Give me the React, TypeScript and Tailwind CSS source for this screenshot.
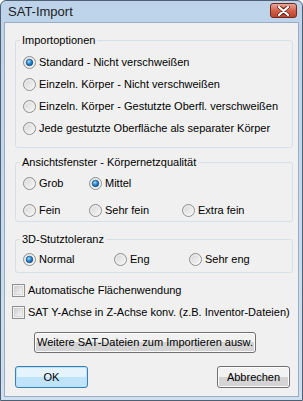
import React from "react";

const font = { fontFamily: '"Liberation Sans", Arial, sans-serif' };

function Radio({ checked = false }: { checked?: boolean }) {
  return (
    <svg width="13" height="13" viewBox="0 0 13 13" className="shrink-0">
      <defs>
        <linearGradient id="rbg" x1="0" y1="0" x2="1" y2="1">
          <stop offset="0" stopColor="#d2d2d2" />
          <stop offset="1" stopColor="#fbfbfb" />
        </linearGradient>
        <radialGradient id="rdot" cx="0.4" cy="0.35" r="0.7">
          <stop offset="0" stopColor="#9fe1ff" />
          <stop offset="0.5" stopColor="#2a8ad4" />
          <stop offset="1" stopColor="#0d4f8e" />
        </radialGradient>
      </defs>
      <circle cx="6.5" cy="6.5" r="6" fill="url(#rbg)" stroke="#8c8f8f" />
      <circle cx="6.5" cy="6.5" r="4.6" fill="none" stroke="#f4f4f4" strokeWidth="0.8" />
      {checked && <circle cx="6.5" cy="6.5" r="3.3" fill="url(#rdot)" stroke="#1b4f7f" strokeWidth="0.7" />}
    </svg>
  );
}

function Check() {
  return (
    <svg width="13" height="13" viewBox="0 0 13 13" className="shrink-0">
      <defs>
        <linearGradient id="cbg" x1="0" y1="0" x2="1" y2="1">
          <stop offset="0" stopColor="#cfcfcf" />
          <stop offset="1" stopColor="#f8f8f8" />
        </linearGradient>
      </defs>
      <rect x="0.5" y="0.5" width="12" height="12" fill="#f4f4f4" stroke="#8e8f8f" />
      <rect x="2.5" y="2.5" width="8" height="8" fill="url(#cbg)" stroke="#c6c6c6" strokeWidth="0.6" />
    </svg>
  );
}

function Option({ label, checked }: { label: string; checked?: boolean }) {
  return (
    <div className="flex items-center gap-[3px] whitespace-nowrap">
      <Radio checked={checked} />
      <span>{label}</span>
    </div>
  );
}

function Group({ title, children, className }: { title: string; children: React.ReactNode; className: string }) {
  return (
    <fieldset className={`ml-[10px] w-[278px] border border-[#d5dfe5] rounded-[3px] ${className}`}>
      <legend className="ml-[4px] px-[2px] leading-[13px]">{title}</legend>
      {children}
    </fieldset>
  );
}

export default function App() {
  return (
    <div
      className="w-[303px] h-[401px] flex flex-col border border-[#4f6075] rounded-t-[6px] bg-linear-to-b from-[#bdd3ea] to-[#cfdff0] px-[3px] pb-[3px] text-[11px] text-black"
      style={font}
    >
      <div className="h-[21px] flex items-center justify-between shrink-0">
        <span className="pl-[4px] text-[13px] text-[#1c1c1c]">SAT-Import</span>
        <div className="mr-[2px] mt-[-2px] w-[27px] h-[15px] rounded-[3px] border border-[#6d2c22] bg-linear-to-b from-[#e9a597] via-[#d3614c] to-[#c3432c] flex items-center justify-center">
          <svg width="13" height="10" viewBox="0 0 13 10">
            <path d="M2 1 L6.5 4.2 L11 1 M2 9 L6.5 5.8 L11 9" stroke="#5a2219" strokeWidth="3.6" fill="none" strokeLinecap="round" />
            <path d="M2 1 L11 9 M11 1 L2 9" stroke="#ffffff" strokeWidth="2.2" fill="none" strokeLinecap="round" />
          </svg>
        </div>
      </div>

      <div className="flex-1 bg-[#f0f0f0] border border-[#98acc3] flex flex-col">
        <Group title="Importoptionen" className="mt-[11px] pt-[4px] pb-[8px]">
          <div className="pl-[7px] flex flex-col">
            <div className="h-[22px] flex items-center"><Option label="Standard - Nicht verschweißen" checked /></div>
            <div className="h-[22px] flex items-center"><Option label="Einzeln. Körper - Nicht verschweißen" /></div>
            <div className="h-[22px] flex items-center"><Option label="Einzeln. Körper - Gestutzte Oberfl. verschweißen" /></div>
            <div className="h-[22px] flex items-center"><Option label="Jede gestutzte Oberfläche als separater Körper" /></div>
          </div>
        </Group>

        <Group title="Ansichtsfenster - Körpernetzqualität" className="mt-[8px] pt-[4px] pb-[1px]">
          <div className="pl-[7px] grid grid-cols-[66px_93px_1fr] gap-y-[7px]">
            <div className="h-[20px] flex items-center"><Option label="Grob" /></div>
            <div className="h-[20px] flex items-center"><Option label="Mittel" checked /></div>
            <div />
            <div className="h-[20px] flex items-center"><Option label="Fein" /></div>
            <div className="h-[20px] flex items-center"><Option label="Sehr fein" /></div>
            <div className="h-[20px] flex items-center"><Option label="Extra fein" /></div>
          </div>
        </Group>

        <Group title="3D-Stutztoleranz" className="mt-[11px] pt-[3px] pb-[3px]">
          <div className="pl-[7px] grid grid-cols-[91px_75px_1fr]">
            <div className="h-[20px] flex items-center"><Option label="Normal" checked /></div>
            <div className="h-[20px] flex items-center"><Option label="Eng" /></div>
            <div className="h-[20px] flex items-center"><Option label="Sehr eng" /></div>
          </div>
        </Group>

        <div className="mt-[6px] ml-[7px] flex flex-col">
          <div className="h-[22px] flex items-center gap-[3px]">
            <Check />
            <span>Automatische Flächenwendung</span>
          </div>
          <div className="h-[22px] flex items-center gap-[3px]">
            <Check />
            <span>SAT Y-Achse in Z-Achse konv. (z.B. Inventor-Dateien)</span>
          </div>
        </div>

        <div className="mt-[9px] ml-[29px] w-[222px] h-[21px] rounded-[3px] border border-[#707070] bg-linear-to-b from-[#f2f2f2] from-50% to-[#d4d4d4] to-50% flex items-center justify-center shadow-[inset_0_0_0_1px_#fcfcfc]">
          Weitere SAT-Dateien zum Importieren ausw.
        </div>

        <div className="mt-[13px] ml-[10px] mr-[8px] flex justify-between">
          <div className="w-[73px] h-[22px] rounded-[3px] border border-[#3c7fb1] bg-linear-to-b from-[#e5f4fc] from-50% to-[#bfe3f8] to-50% flex items-center justify-center shadow-[inset_0_0_0_1px_#b5e2fa]">
            OK
          </div>
          <div className="w-[73px] h-[22px] rounded-[3px] border border-[#707070] bg-linear-to-b from-[#f2f2f2] from-50% to-[#d4d4d4] to-50% flex items-center justify-center shadow-[inset_0_0_0_1px_#fcfcfc]">
            Abbrechen
          </div>
        </div>
      </div>
    </div>
  );
}
